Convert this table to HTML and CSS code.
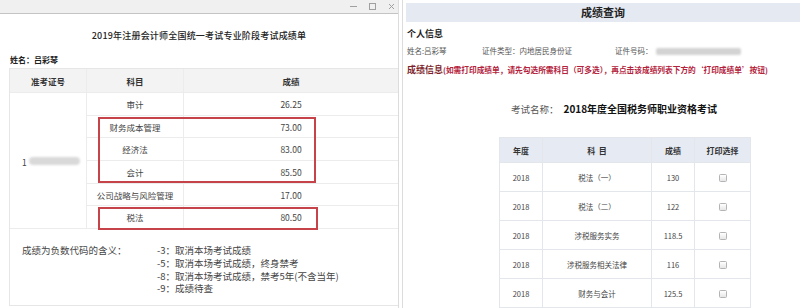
FILE: index.html
```html
<!DOCTYPE html>
<html lang="zh-CN">
<head>
    <meta charset="UTF-8">
    <title>成绩单</title>
    <link rel="stylesheet" href="styles.css">
</head>
<body>

<div class="page">
    <section class="report">
        <div class="titlebar">
            <span class="win-btn">
                <svg width="7" height="7" viewBox="0 0 7 7"><path d="M0 3.5H7" stroke="#a0a0a0" stroke-width="1"/></svg>
            </span>
            <span class="win-btn">
                <svg width="7" height="7" viewBox="0 0 7 7"><rect x="0.5" y="0.5" width="6" height="6" fill="none" stroke="#a0a0a0" stroke-width="1"/></svg>
            </span>
            <span class="win-btn">
                <svg width="7" height="7" viewBox="0 0 7 7"><path d="M1 1L6 6M6 1L1 6" stroke="#a0a0a0" stroke-width="1"/></svg>
            </span>
        </div>

        <h1 class="report-title">2019年注册会计师全国统一考试专业阶段考试成绩单</h1>
        <p class="report-name">姓名：吕彩琴</p>

        <div class="score-box">
            <table class="score-table">
                <colgroup>
                    <col class="col-id">
                    <col class="col-subject">
                    <col>
                </colgroup>
                <tr class="head-row">
                    <th>准考证号</th>
                    <th>科目</th>
                    <th>成绩</th>
                </tr>
                <tr>
                    <td class="id-cell" rowspan="6"><span class="id-num">1</span><span class="blur-bar"></span></td>
                    <td>审计</td>
                    <td>26.25</td>
                </tr>
                <tr><td>财务成本管理</td><td>73.00</td></tr>
                <tr><td>经济法</td><td>83.00</td></tr>
                <tr><td>会计</td><td>85.50</td></tr>
                <tr><td>公司战略与风险管理</td><td>17.00</td></tr>
                <tr><td>税法</td><td>80.50</td></tr>
            </table>

            <div class="mark mark-a"></div>
            <div class="mark mark-b"></div>

            <div class="notes">
                <div class="notes-label">成绩为负数代码的含义：</div>
                <div class="notes-list">
                    <div>-3：取消本场考试成绩</div>
                    <div>-5：取消本场考试成绩，终身禁考</div>
                    <div>-8：取消本场考试成绩，禁考5年(不含当年)</div>
                    <div>-9：成绩待查</div>
                </div>
            </div>
        </div>
    </section>

    <section class="query">
        <div class="query-bar">成绩查询</div>
        <h2 class="query-sub">个人信息</h2>
        <div class="info-row">
            <span>姓名:吕彩琴</span>
            <span>证件类型：内地居民身份证</span>
            <span class="id-field">证件号码：<span class="blur-bar wide"></span></span>
        </div>
        <p class="score-info"><b>成绩信息</b><span>(如需打印成绩单，请先勾选所需科目（可多选），再点击该成绩列表下方的‘打印成绩单’按钮)</span></p>

        <p class="exam-name">考试名称：<b>2018年度全国税务师职业资格考试</b></p>

        <table class="tax-table">
            <colgroup>
                <col class="c-year">
                <col class="c-subj">
                <col class="c-score">
                <col>
            </colgroup>
            <tr class="head-row">
                <th>年度</th>
                <th>科&nbsp;&nbsp;目</th>
                <th>成绩</th>
                <th>打印选择</th>
            </tr>
            <tr><td>2018</td><td>税法（一）</td><td>130</td><td><span class="check"></span></td></tr>
            <tr><td>2018</td><td>税法（二）</td><td>122</td><td><span class="check"></span></td></tr>
            <tr><td>2018</td><td>涉税服务实务</td><td>118.5</td><td><span class="check"></span></td></tr>
            <tr><td>2018</td><td>涉税服务相关法律</td><td>116</td><td><span class="check"></span></td></tr>
            <tr><td>2018</td><td>财务与会计</td><td>125.5</td><td><span class="check"></span></td></tr>
        </table>
    </section>
</div>

</body>
</html>
```

FILE: styles.css
```css
body {
    margin: 0;
    padding: 0;
    background: #ffffff;
    font-family: "Noto Sans CJK SC", "Noto Sans", sans-serif;
    color: #333;
    overflow: hidden;
}
.page {
    display: flex;
    width: 800px;
    height: 308px;
    overflow: hidden;
}

/* left: CPA report */
.report {
    width: 398px;
    border-right: 1px solid #dcdcdc;
    flex-shrink: 0;
}
.titlebar {
    height: 13px;
    background: #f0f0f0;
    border-bottom: 1px solid #c4c4c4;
    display: flex;
    justify-content: flex-end;
    align-items: center;
    gap: 12px;
    padding-right: 3px;
}
.win-btn {
    display: flex;
    width: 7px;
    height: 7px;
}
.report-title {
    margin: 15px 0 0;
    text-align: center;
    font-size: 9px;
    line-height: 14px;
    font-weight: 500;
    color: #222;
    letter-spacing: 0.2px;
}
.report-name {
    margin: 11px 0 0 10px;
    font-size: 8px;
    line-height: 12px;
    font-weight: bold;
    color: #222;
}
.score-box {
    position: relative;
    margin: 2px 0 0 9px;
    border: 1px solid #e6e6e6;
    border-right: none;
}
.score-table {
    width: 100%;
    table-layout: fixed;
    border-collapse: separate;
    border-spacing: 0;
    font-size: 8.5px;
    color: #444;
}
.col-id {
    width: 77px;
}
.col-subject {
    width: 97px;
}
.score-table th,
.score-table td {
    padding: 0;
    height: 21.7px;
    text-align: center;
    border-bottom: 1px solid #ececec;
    border-right: 1px solid #ececec;
}
.score-table th:last-child,
.score-table td:last-child {
    border-right: none;
}
.score-table .head-row th {
    height: 23px;
    background: #f3f3f3;
    font-weight: bold;
    color: #333;
}
.score-table tr:last-child td {
    border-bottom: none;
}
.score-table .id-cell {
    border-bottom: none;
    text-align: left;
    padding-left: 12px;
}
.id-num {
    vertical-align: middle;
}
.blur-bar {
    display: inline-block;
    vertical-align: middle;
    width: 51px;
    height: 8px;
    margin-left: 2px;
    background: #d9d9d9;
    border-radius: 4px;
    filter: blur(1.2px);
}
.mark {
    position: absolute;
    border: 2px solid #c7434a;
    box-sizing: border-box;
}
.mark-a {
    left: 88px;
    top: 48px;
    width: 218px;
    height: 66px;
}
.mark-b {
    left: 88px;
    top: 138px;
    width: 220px;
    height: 23px;
}
.notes {
    height: 77px;
    border-top: 1px solid #ececec;
    padding: 15px 0 0 12px;
    box-sizing: border-box;
    display: grid;
    grid-template-columns: 135px auto;
    font-size: 9.5px;
    line-height: 12.7px;
    color: #444;
}

/* right: tax exam query */
.query {
    flex: 1;
    margin-left: 3px;
    border-left: 1px solid #dcdcdc;
    padding-left: 4px;
}
.query-bar {
    margin: 3px 0 0 -1px;
    height: 19px;
    line-height: 19px;
    background: #e4e9f2;
    text-align: center;
    font-size: 11px;
    font-weight: bold;
    color: #222;
}
.query-sub {
    margin: 6px 0 0;
    font-size: 9px;
    line-height: 12px;
    font-weight: bold;
    color: #222;
}
.info-row {
    margin-top: 6px;
    display: grid;
    grid-template-columns: 75px 133px auto;
    font-size: 7.5px;
    line-height: 10px;
    color: #555;
}
.id-field {
    display: flex;
    align-items: center;
}
.blur-bar.wide {
    width: 85px;
    height: 7px;
    margin-left: 3px;
    border-radius: 2px;
    background: #d3d3d3;
    filter: blur(1px);
}
.score-info {
    margin: 9px 0 0;
    font-size: 7.7px;
    line-height: 10px;
    white-space: nowrap;
}
.score-info b {
    font-size: 9px;
    color: #7d1f2c;
}
.score-info span {
    font-weight: bold;
    color: #b3213b;
}
.exam-name {
    margin: 27px 0 0 104px;
    font-size: 9.5px;
    line-height: 14px;
    color: #555;
}
.exam-name b {
    margin-left: 5px;
    font-size: 10px;
    color: #111;
}
.tax-table {
    margin: 21px 0 0 92px;
    width: 252px;
    table-layout: fixed;
    border-collapse: collapse;
    font-size: 7.5px;
    color: #444;
}
.c-year {
    width: 43px;
}
.c-subj {
    width: 109px;
}
.c-score {
    width: 43px;
}
.tax-table th,
.tax-table td {
    padding: 0;
    height: 28px;
    text-align: center;
    border: 1px solid #e3e6ea;
}
.tax-table .head-row th {
    height: 24px;
    background: #e6ebf3;
    font-size: 8px;
    font-weight: bold;
    color: #333;
}
.check {
    display: inline-block;
    vertical-align: middle;
    width: 6px;
    height: 6px;
    border: 1px solid #b4b4b4;
    border-radius: 1.5px;
    background: linear-gradient(#ffffff, #e6e6e6);
}
```
